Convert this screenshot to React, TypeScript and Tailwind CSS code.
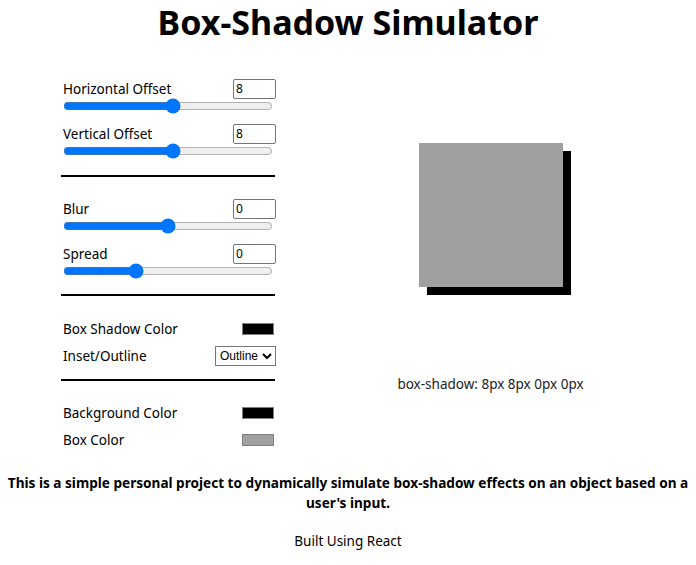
import React, { useState } from "react";

function SliderRow({ label, value, min, max, onChange }: { label: string; value: number; min: number; max: number; onChange: (v: number) => void }) {
  return (
    <div className="flex flex-col">
      <div className="flex items-center justify-between h-[19px]">
        <span className="text-[13.5px] leading-[19px] mt-[1px]">{label}</span>
        <input
          type="number"
          value={value}
          onChange={(e) => onChange(Number(e.target.value))}
          className="w-[43px] h-[20px] border border-[#767676] rounded-[2px] px-[2px] text-[12px] leading-[16px] bg-white"
        />
      </div>
      <input
        type="range"
        min={min}
        max={max}
        value={value}
        onChange={(e) => onChange(Number(e.target.value))}
        className="w-[210px] h-[16px] m-0"
      />
    </div>
  );
}

export default function App() {
  const [h, setH] = useState(8);
  const [v, setV] = useState(8);
  const [blur, setBlur] = useState(0);
  const [spread, setSpread] = useState(0);
  const [inset, setInset] = useState("Outline");

  const shadow = `${inset === "Inset" ? "inset " : ""}${h}px ${v}px ${blur}px ${spread}px #000000`;

  return (
    <div className="w-[696px] min-h-[565px] bg-white text-black" style={{ fontFamily: '"Noto Sans", "Open Sans", sans-serif' }}>
      <h1 className="text-center text-[34px] font-bold leading-[44px] pt-0">Box-Shadow Simulator</h1>
      <div className="flex mt-[35px]">
        <div className="w-[287px] pl-[63px] pr-[11px] flex flex-col">
          <div className="flex flex-col gap-[10px]">
            <SliderRow label="Horizontal Offset" value={h} min={-150} max={150} onChange={setH} />
            <SliderRow label="Vertical Offset" value={v} min={-150} max={150} onChange={setV} />
          </div>
          <div className="h-[2px] bg-black w-[214px] ml-[-2px] mt-[16px]" />
          <div className="flex flex-col gap-[10px] mt-[22px]">
            <SliderRow label="Blur" value={blur} min={-100} max={100} onChange={setBlur} />
            <SliderRow label="Spread" value={spread} min={-50} max={100} onChange={setSpread} />
          </div>
          <div className="h-[2px] bg-black w-[214px] ml-[-2px] mt-[15px]" />
          <div className="flex items-center justify-between mt-[26px] h-[14px]">
            <span className="text-[13.5px]">Box Shadow Color</span>
            <div className="w-[32px] h-[12px] bg-black border border-[#808080] mr-[2px]" />
          </div>
          <div className="flex items-center justify-between mt-[10px] h-[20px]">
            <span className="text-[13.5px]">Inset/Outline</span>
            <select
              value={inset}
              onChange={(e) => setInset(e.target.value)}
              className="h-[20px] border border-[#767676] rounded-[0px] text-[12px] bg-white"
              style={{ fontFamily: '"Liberation Sans", Arial, sans-serif' }}
            >
              <option>Outline</option>
              <option>Inset</option>
            </select>
          </div>
          <div className="h-[2px] bg-black w-[214px] ml-[-2px] mt-[13px]" />
          <div className="flex items-center justify-between mt-[25px] h-[14px]">
            <span className="text-[13.5px]">Background Color</span>
            <div className="w-[32px] h-[12px] bg-black border border-[#808080] mr-[2px]" />
          </div>
          <div className="flex items-center justify-between mt-[13px] h-[14px]">
            <span className="text-[13.5px]">Box Color</span>
            <div className="w-[32px] h-[12px] bg-[#a0a0a0] border border-[#808080] mr-[2px]" />
          </div>
        </div>
        <div className="flex-1 flex flex-col items-center pt-[64px] pr-[2px]">
          <div className="w-[144px] h-[144px] bg-[#a0a0a0]" style={{ boxShadow: shadow }} />
          <div className="mt-[87px] text-[13.5px] text-[#222]">box-shadow: {h}px {v}px {blur}px {spread}px</div>
        </div>
      </div>
      <p className="text-center font-bold text-[13.6px] leading-[20px] mt-[26px] px-[4px]">
        This is a simple personal project to dynamically simulate box-shadow effects on an object based on a user's input.
      </p>
      <p className="text-center text-[13.5px] mt-[18px]">Built Using React</p>
    </div>
  );
}
